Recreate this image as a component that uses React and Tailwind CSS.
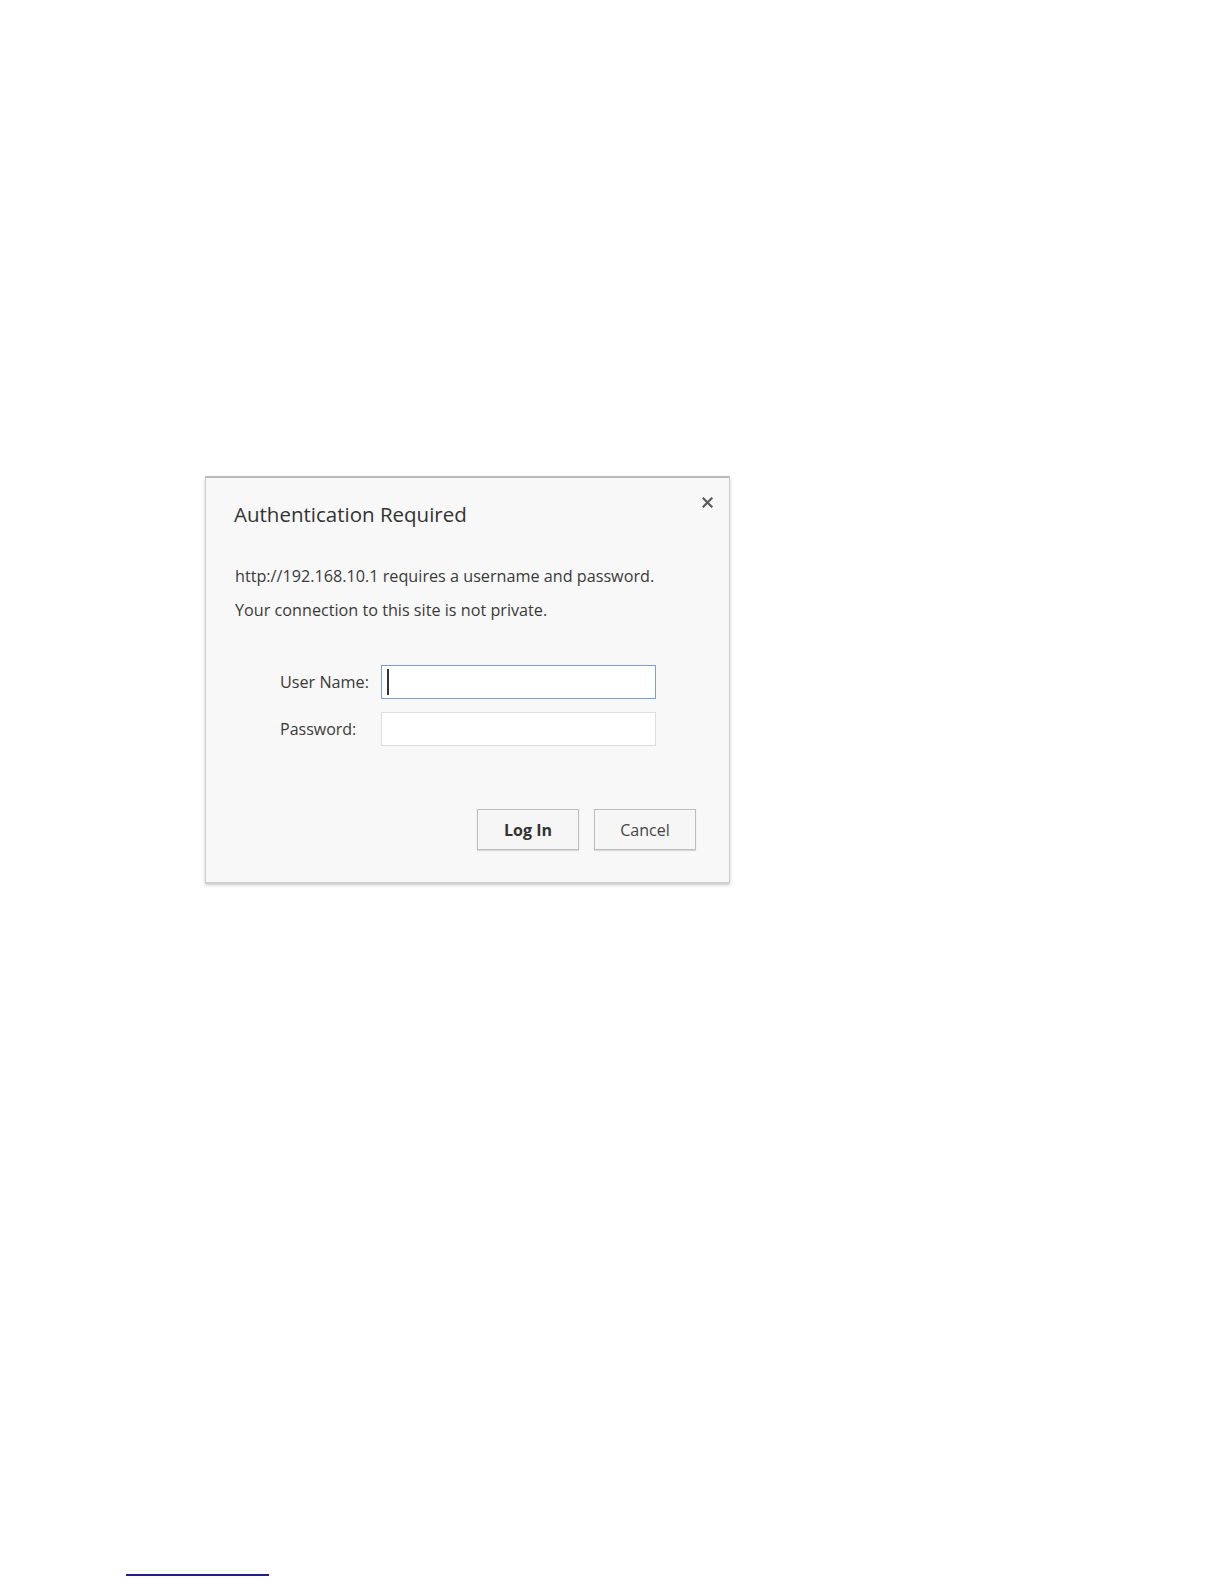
import React from "react";

export default function App() {
  const font = { fontFamily: '"Open Sans", "Noto Sans", sans-serif' };
  return (
    <div className="w-full h-[1584px] bg-white flex flex-col" style={font}>
      <div className="relative ml-[205px] mt-[476px] w-[525px] h-[407px] bg-[#f8f8f8] border border-[#cdcdcd] border-t-2 border-t-[#b9b9b9] shadow-[0_2px_3px_rgba(0,0,0,0.22)] flex flex-col">
        <button className="absolute top-[17px] right-[15px] w-[14px] h-[14px] flex items-center justify-center">
          <svg width="11" height="11" viewBox="0 0 11 11">
            <path d="M1.5 1.5 L9.5 9.5 M9.5 1.5 L1.5 9.5" stroke="#5a5a5a" strokeWidth="2.2" strokeLinecap="square" />
          </svg>
        </button>
        <div className="pl-[28px] pt-[22px] text-[20.5px] leading-[28px] text-[#333333]">Authentication Required</div>
        <div className="pl-[29px] mt-[31px] text-[16.2px] leading-[34px] text-[#3a3a3a]">
          <div>http://192.168.10.1 requires a username and password.</div>
          <div>Your connection to this site is not private.</div>
        </div>
        <div className="mt-[38px] flex flex-col gap-[13px]">
          <div className="flex items-center">
            <label className="w-[101px] pl-[74px] box-content text-[16.2px] text-[#3a3a3a]">User Name:</label>
            <div className="w-[275px] h-[34px] bg-white border border-[#7b9ed6] flex items-center pl-[5px]">
              <div className="w-[2px] h-[26px] bg-[#333333]" />
            </div>
          </div>
          <div className="flex items-center">
            <label className="w-[101px] pl-[74px] box-content text-[16px] text-[#3a3a3a]">Password:</label>
            <div className="w-[275px] h-[34px] bg-white border border-[#dddddd]" />
          </div>
        </div>
        <div className="mt-[63px] flex justify-end gap-[15px] pr-[33px]">
          <button className="w-[102px] h-[41px] bg-[#f6f6f6] border border-[#bdbdbd] shadow-[0_1px_1px_rgba(0,0,0,0.12)] text-[16px] font-bold text-[#333333]">Log In</button>
          <button className="w-[102px] h-[41px] bg-[#f6f6f6] border border-[#bdbdbd] shadow-[0_1px_1px_rgba(0,0,0,0.12)] text-[16px] text-[#444444]">Cancel</button>
        </div>
      </div>
      <div className="mt-auto mb-[8px] ml-[126px] w-[143px] h-[2px] bg-[#20208c]" />
    </div>
  );
}
